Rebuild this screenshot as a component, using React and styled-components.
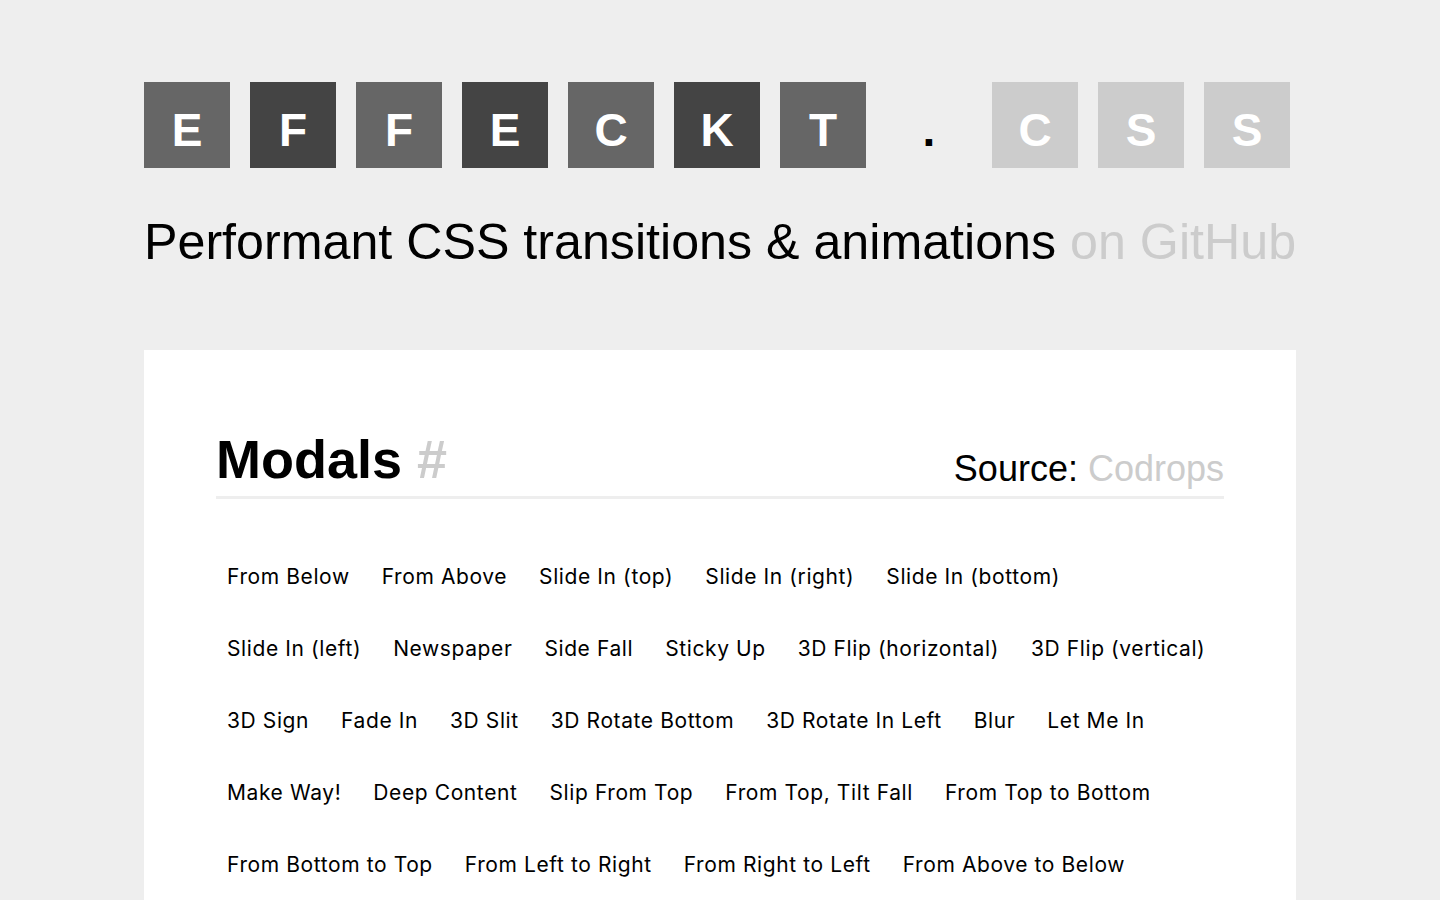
import React from 'react';
import styled, { createGlobalStyle } from 'styled-components';

const GlobalStyle = createGlobalStyle`
    html, body {
        margin: 0;
        padding: 0;
        background: #eee;
        font-family: "Liberation Sans", Arial, sans-serif;
        color: #000;
    }
`

const Page = styled.div`
    width: 1152px;
    margin: 0 auto;
    padding-top: 82px;
`

const Logo = styled.div`
    display: flex;
    gap: 20px;
`

const LetterBox = styled.span`
    width: 86px;
    height: 86px;
    display: flex;
    align-items: center;
    justify-content: center;
    padding-top: 10px;
    box-sizing: border-box;
    background: ${props => props.shade || 'transparent'};
    color: ${props => props.shade ? '#fff' : '#000'};
    font-weight: bold;
    font-size: 46px;
    line-height: 1;
`

const Tagline = styled.h1`
    margin: 46px 0 0;
    font-size: 50.2px;
    font-weight: normal;
    line-height: 1.15;
    white-space: nowrap;
    a {
        color: #ccc;
        text-decoration: none;
    }
`

const Card = styled.section`
    margin-top: 78px;
    background: #fff;
    padding: 78px 72px 40px;
`

const SectionHead = styled.header`
    display: flex;
    justify-content: space-between;
    align-items: flex-end;
    border-bottom: 3px solid #eee;
    padding-bottom: 6px;
    h2 {
        margin: 0;
        font-size: 54px;
        font-weight: bold;
        line-height: 1.15;
    }
    h2 a, p a {
        color: #ccc;
        text-decoration: none;
    }
    p {
        margin: 0;
        font-size: 36px;
        line-height: normal;
    }
`

const ButtonGrid = styled.div`
    display: flex;
    flex-wrap: wrap;
    column-gap: 10px;
    row-gap: 20px;
    margin-top: 52px;
`

const DemoButton = styled.button`
    height: 52px;
    padding: 0 11px;
    border: 0;
    background: transparent;
    font-family: Inter, "Noto Sans", sans-serif;
    font-size: 21px;
    letter-spacing: 0.6px;
    color: #000;
    cursor: pointer;
`

const letters = [
    ['E', '#666'], ['F', '#444'], ['F', '#666'], ['E', '#444'], ['C', '#666'],
    ['K', '#444'], ['T', '#666'], ['.', null], ['C', '#ccc'], ['S', '#ccc'], ['S', '#ccc'],
];

const modals = [
    'From Below', 'From Above', 'Slide In (top)', 'Slide In (right)', 'Slide In (bottom)',
    'Slide In (left)', 'Newspaper', 'Side Fall', 'Sticky Up', '3D Flip (horizontal)', '3D Flip (vertical)',
    '3D Sign', 'Fade In', '3D Slit', '3D Rotate Bottom', '3D Rotate In Left', 'Blur', 'Let Me In',
    'Make Way!', 'Deep Content', 'Slip From Top', 'From Top, Tilt Fall', 'From Top to Bottom',
    'From Bottom to Top', 'From Left to Right', 'From Right to Left', 'From Above to Below',
];

export default function App() {
    return <>
        <GlobalStyle />
        <Page>
            <Logo>
                {letters.map(([ch, shade], i) => (
                    <LetterBox key={i} shade={shade}>{ch}</LetterBox>
                ))}
            </Logo>
            <Tagline>
                Performant CSS transitions &amp; animations <a href="#">on GitHub</a>
            </Tagline>
            <Card>
                <SectionHead>
                    <h2>Modals <a href="#">#</a></h2>
                    <p>Source: <a href="#">Codrops</a></p>
                </SectionHead>
                <ButtonGrid>
                    {modals.map(name => <DemoButton key={name}>{name}</DemoButton>)}
                </ButtonGrid>
            </Card>
        </Page>
    </>
}
